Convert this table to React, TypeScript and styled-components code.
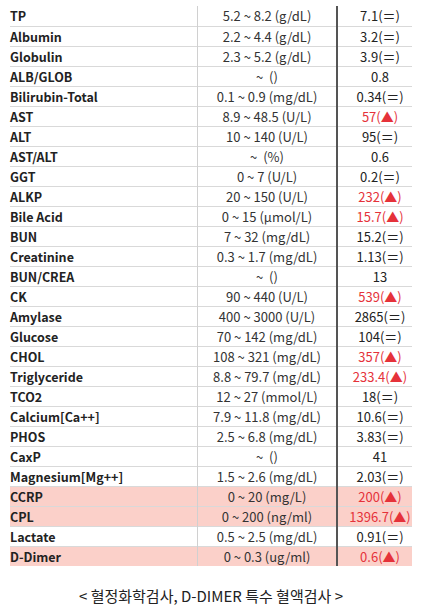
import React from "react";
import styled, { createGlobalStyle } from "styled-components";

const GlobalStyle = createGlobalStyle`
    body {
        margin: 0;
        background: #ffffff;
        font-family: "Noto Sans CJK KR", "Noto Sans", sans-serif;
        color: #222222;
    }
`;

const Page = styled.div`
    display: flex;
    flex-direction: column;
    align-items: center;
    padding: 6px 10px 0;
`;

const Table = styled.table`
    width: 402px;
    border-collapse: collapse;
    table-layout: fixed;
    font-size: 13px;
`;

const Row = styled.tr<{ $alert?: boolean }>`
    height: 20px;
    background: ${(p) => (p.$alert ? "#fbd0c9" : "transparent")};
    border-bottom: 1px solid #d9d9d9;
    &:last-child {
        border-bottom: none;
    }
`;

const Name = styled.td`
    width: 187px;
    padding: 0;
    font-size: 12.5px;
    font-weight: 700;
    line-height: 19px;
    white-space: nowrap;
    border-right: 1px solid #d0d0d0;
`;

const Range = styled.td`
    width: 138px;
    padding: 0;
    text-align: center;
    line-height: 19px;
    white-space: pre;
    color: #333333;
    border-right: 2px solid #555555;
`;

const Value = styled.td<{ $high?: boolean }>`
    padding: 0 0 0 10px;
    text-align: center;
    line-height: 19px;
    white-space: nowrap;
    color: ${(p) => (p.$high ? "#e5323a" : "#222222")};
`;

const Caption = styled.div`
    margin-top: 19px;
    font-size: 15px;
    color: #222222;
`;

type Item = {
    name: string;
    range: string;
    value: string;
    mark?: "eq" | "up";
    alert?: boolean;
};

const items: Item[] = [
    { name: "TP", range: "5.2 ~ 8.2 (g/dL)", value: "7.1", mark: "eq" },
    { name: "Albumin", range: "2.2 ~ 4.4 (g/dL)", value: "3.2", mark: "eq" },
    { name: "Globulin", range: "2.3 ~ 5.2 (g/dL)", value: "3.9", mark: "eq" },
    { name: "ALB/GLOB", range: "~  ()", value: "0.8" },
    { name: "Bilirubin-Total", range: "0.1 ~ 0.9 (mg/dL)", value: "0.34", mark: "eq" },
    { name: "AST", range: "8.9 ~ 48.5 (U/L)", value: "57", mark: "up" },
    { name: "ALT", range: "10 ~ 140 (U/L)", value: "95", mark: "eq" },
    { name: "AST/ALT", range: "~  (%)", value: "0.6" },
    { name: "GGT", range: "0 ~ 7 (U/L)", value: "0.2", mark: "eq" },
    { name: "ALKP", range: "20 ~ 150 (U/L)", value: "232", mark: "up" },
    { name: "Bile Acid", range: "0 ~ 15 (μmol/L)", value: "15.7", mark: "up" },
    { name: "BUN", range: "7 ~ 32 (mg/dL)", value: "15.2", mark: "eq" },
    { name: "Creatinine", range: "0.3 ~ 1.7 (mg/dL)", value: "1.13", mark: "eq" },
    { name: "BUN/CREA", range: "~  ()", value: "13" },
    { name: "CK", range: "90 ~ 440 (U/L)", value: "539", mark: "up" },
    { name: "Amylase", range: "400 ~ 3000 (U/L)", value: "2865", mark: "eq" },
    { name: "Glucose", range: "70 ~ 142 (mg/dL)", value: "104", mark: "eq" },
    { name: "CHOL", range: "108 ~ 321 (mg/dL)", value: "357", mark: "up" },
    { name: "Triglyceride", range: "8.8 ~ 79.7 (mg/dL)", value: "233.4", mark: "up" },
    { name: "TCO2", range: "12 ~ 27 (mmol/L)", value: "18", mark: "eq" },
    { name: "Calcium[Ca++]", range: "7.9 ~ 11.8 (mg/dL)", value: "10.6", mark: "eq" },
    { name: "PHOS", range: "2.5 ~ 6.8 (mg/dL)", value: "3.83", mark: "eq" },
    { name: "CaxP", range: "~  ()", value: "41" },
    { name: "Magnesium[Mg++]", range: "1.5 ~ 2.6 (mg/dL)", value: "2.03", mark: "eq" },
    { name: "CCRP", range: "0 ~ 20 (mg/L)", value: "200", mark: "up", alert: true },
    { name: "CPL", range: "0 ~ 200 (ng/ml)", value: "1396.7", mark: "up", alert: true },
    { name: "Lactate", range: "0.5 ~ 2.5 (mg/dL)", value: "0.91", mark: "eq" },
    { name: "D-Dimer", range: "0 ~ 0.3 (ug/ml)", value: "0.6", mark: "up", alert: true },
];

function markText(mark?: "eq" | "up") {
    if (mark === "eq") return "(＝)";
    if (mark === "up") return "(▲)";
    return "";
}

export default function App() {
    return (
        <Page>
            <GlobalStyle />
            <Table>
                <tbody>
                    {items.map((it) => (
                        <Row key={it.name} $alert={it.alert}>
                            <Name>{it.name}</Name>
                            <Range>{it.range}</Range>
                            <Value $high={it.mark === "up"}>
                                {it.value}
                                {markText(it.mark)}
                            </Value>
                        </Row>
                    ))}
                </tbody>
            </Table>
            <Caption>&lt; 혈정화학검사, D-DIMER 특수 혈액검사 &gt;</Caption>
        </Page>
    );
}
